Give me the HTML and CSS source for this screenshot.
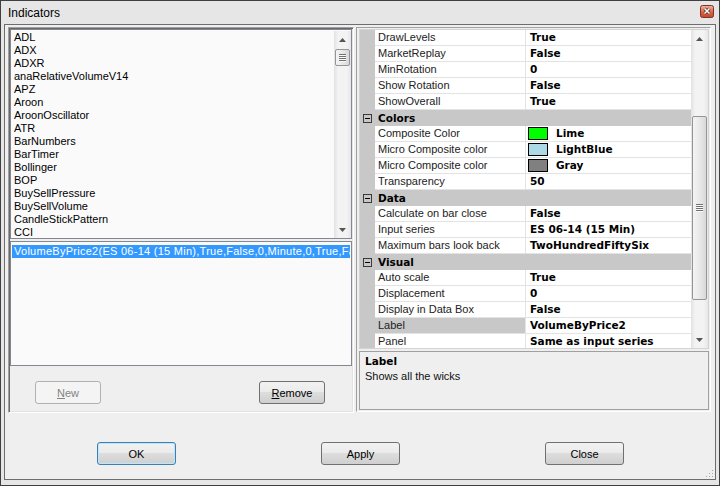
FILE: index.html
```html
<!DOCTYPE html>
<html lang="en">
<head>
    <meta charset="UTF-8">
    <title>Indicators</title>
    <link rel="stylesheet" href="styles.css">
</head>
<body>
    <div class="window">
        <div class="titlebar">
            <span class="title">Indicators</span>
            <div class="close-btn">
                <svg width="14" height="13" viewBox="0 0 14 13">
                    <defs>
                        <linearGradient id="closeGrad" x1="0" y1="0" x2="0" y2="1">
                            <stop offset="0" stop-color="#f2b7a6"/>
                            <stop offset="0.5" stop-color="#dc6b50"/>
                            <stop offset="1" stop-color="#c4452b"/>
                        </linearGradient>
                    </defs>
                    <rect x="0.5" y="0.5" width="13" height="12" rx="2" fill="url(#closeGrad)" stroke="#7d3424"/>
                    <path d="M4.5 3.5 L9.5 8.5 M9.5 3.5 L4.5 8.5" stroke="#5b2a20" stroke-width="3"/>
                    <path d="M4.5 3.5 L9.5 8.5 M9.5 3.5 L4.5 8.5" stroke="#fff" stroke-width="1.5"/>
                </svg>
            </div>
        </div>
        <div class="client">
            <div class="panes">
                <div class="left-pane">
                    <div class="listbox list-top">
                        <div class="items">
                            <div class="item">ADL</div>
                            <div class="item">ADX</div>
                            <div class="item">ADXR</div>
                            <div class="item">anaRelativeVolumeV14</div>
                            <div class="item">APZ</div>
                            <div class="item">Aroon</div>
                            <div class="item">AroonOscillator</div>
                            <div class="item">ATR</div>
                            <div class="item">BarNumbers</div>
                            <div class="item">BarTimer</div>
                            <div class="item">Bollinger</div>
                            <div class="item">BOP</div>
                            <div class="item">BuySellPressure</div>
                            <div class="item">BuySellVolume</div>
                            <div class="item">CandleStickPattern</div>
                            <div class="item">CCI</div>
                        </div>
                        <div class="vscroll">
                            <div class="sb-arrow"><svg width="7" height="4" viewBox="0 0 7 4"><path d="M0 4 L3.5 0 L7 4Z" fill="#555"/></svg></div>
                            <div class="sb-track">
                                <div class="sb-thumb thumb-list">
                                    <svg width="7" height="8" viewBox="0 0 7 8"><path d="M0 0.5h7M0 2.5h7M0 4.5h7M0 6.5h7" stroke="#707070"/><path d="M0 1.5h7M0 3.5h7M0 5.5h7M0 7.5h7" stroke="#fbfbfb"/></svg>
                                </div>
                            </div>
                            <div class="sb-arrow"><svg width="7" height="4" viewBox="0 0 7 4"><path d="M0 0 L7 0 L3.5 4Z" fill="#555"/></svg></div>
                        </div>
                    </div>
                    <div class="listbox list-bottom">
                        <div class="item selected">VolumeByPrice2(ES 06-14 (15 Min),True,False,0,Minute,0,True,False,Tr</div>
                    </div>
                    <div class="left-buttons">
                        <button class="btn btn-small" disabled><u>N</u>ew</button>
                        <button class="btn btn-small"><u>R</u>emove</button>
                    </div>
                </div>
                <div class="right-pane">
                    <div class="prop-grid">
                        <div class="prop-rows">
                            <div class="prop-row"><div class="gutter"></div><div class="prop-name">DrawLevels</div><div class="prop-value">True</div></div>
                            <div class="prop-row"><div class="gutter"></div><div class="prop-name">MarketReplay</div><div class="prop-value">False</div></div>
                            <div class="prop-row"><div class="gutter"></div><div class="prop-name">MinRotation</div><div class="prop-value">0</div></div>
                            <div class="prop-row"><div class="gutter"></div><div class="prop-name">Show Rotation</div><div class="prop-value">False</div></div>
                            <div class="prop-row"><div class="gutter"></div><div class="prop-name">ShowOverall</div><div class="prop-value">True</div></div>
                            <div class="cat-row"><span class="expander"></span>Colors</div>
                            <div class="prop-row"><div class="gutter"></div><div class="prop-name">Composite Color</div><div class="prop-value color-value"><span class="swatch swatch-lime"></span>Lime</div></div>
                            <div class="prop-row"><div class="gutter"></div><div class="prop-name">Micro Composite color</div><div class="prop-value color-value"><span class="swatch swatch-lightblue"></span>LightBlue</div></div>
                            <div class="prop-row"><div class="gutter"></div><div class="prop-name">Micro Composite color</div><div class="prop-value color-value"><span class="swatch swatch-gray"></span>Gray</div></div>
                            <div class="prop-row"><div class="gutter"></div><div class="prop-name">Transparency</div><div class="prop-value">50</div></div>
                            <div class="cat-row"><span class="expander"></span>Data</div>
                            <div class="prop-row"><div class="gutter"></div><div class="prop-name">Calculate on bar close</div><div class="prop-value">False</div></div>
                            <div class="prop-row"><div class="gutter"></div><div class="prop-name">Input series</div><div class="prop-value">ES 06-14 (15 Min)</div></div>
                            <div class="prop-row"><div class="gutter"></div><div class="prop-name">Maximum bars look back</div><div class="prop-value">TwoHundredFiftySix</div></div>
                            <div class="cat-row"><span class="expander"></span>Visual</div>
                            <div class="prop-row"><div class="gutter"></div><div class="prop-name">Auto scale</div><div class="prop-value">True</div></div>
                            <div class="prop-row"><div class="gutter"></div><div class="prop-name">Displacement</div><div class="prop-value">0</div></div>
                            <div class="prop-row"><div class="gutter"></div><div class="prop-name">Display in Data Box</div><div class="prop-value">False</div></div>
                            <div class="prop-row"><div class="gutter"></div><div class="prop-name selected">Label</div><div class="prop-value">VolumeByPrice2</div></div>
                            <div class="prop-row"><div class="gutter"></div><div class="prop-name">Panel</div><div class="prop-value">Same as input series</div></div>
                        </div>
                        <div class="vscroll">
                            <div class="sb-arrow"><svg width="7" height="4" viewBox="0 0 7 4"><path d="M0 4 L3.5 0 L7 4Z" fill="#555"/></svg></div>
                            <div class="sb-track">
                                <div class="sb-thumb thumb-grid">
                                    <svg width="7" height="8" viewBox="0 0 7 8"><path d="M0 0.5h7M0 2.5h7M0 4.5h7M0 6.5h7" stroke="#707070"/><path d="M0 1.5h7M0 3.5h7M0 5.5h7M0 7.5h7" stroke="#fbfbfb"/></svg>
                                </div>
                            </div>
                            <div class="sb-arrow"><svg width="7" height="4" viewBox="0 0 7 4"><path d="M0 0 L7 0 L3.5 4Z" fill="#555"/></svg></div>
                        </div>
                    </div>
                    <div class="desc">
                        <div class="desc-title">Label</div>
                        <div class="desc-text">Shows all the wicks</div>
                    </div>
                </div>
            </div>
            <div class="dialog-buttons">
                <button class="btn btn-dialog btn-default">OK</button>
                <button class="btn btn-dialog">Apply</button>
                <button class="btn btn-dialog">Close</button>
            </div>
            <svg class="grip" width="10" height="10" viewBox="0 0 10 10">
                <g fill="#a8a8a8">
                    <rect x="8" y="2" width="1" height="1"/>
                    <rect x="5" y="5" width="1" height="1"/><rect x="8" y="5" width="1" height="1"/>
                    <rect x="2" y="8" width="1" height="1"/><rect x="5" y="8" width="1" height="1"/><rect x="8" y="8" width="1" height="1"/>
                </g>
            </svg>
        </div>
    </div>
</body>
</html>
```

FILE: styles.css
```css
body {
    margin: 0;
    font-family: "Liberation Sans", Arial, sans-serif;
    font-size: 11px;
    background: #fff;
}
.window {
    width: 720px;
    height: 486px;
    box-sizing: border-box;
    border: 1px solid #3f3f3f;
    background: #e6e6e6;
    padding: 0 3px 5px 3px;
    display: flex;
    flex-direction: column;
}
.titlebar {
    height: 23px;
    flex: none;
    display: flex;
    justify-content: space-between;
    align-items: flex-start;
}
.title {
    margin: 5px 0 0 4px;
    font-size: 12px;
    line-height: 15px;
    color: #000;
}
.close-btn {
    margin: 4px 2px 0 0;
    height: 13px;
}
.client {
    flex: 1;
    border: 1px solid #6d6d6d;
    background: #efefef;
    display: flex;
    flex-direction: column;
    position: relative;
}
.panes {
    display: flex;
    padding: 2px 0 0 3px;
}
.left-pane {
    width: 346px;
    height: 386px;
    box-sizing: border-box;
    border: 1px solid;
    border-color: #a0a0a0 #fff #fff #a0a0a0;
    box-shadow: inset 1px 1px 0 #696969, inset -1px -1px 0 #e3e3e3;
    padding: 1px;
    display: flex;
    flex-direction: column;
}
.listbox {
    border: 1px solid #828790;
    background: #fafafa;
    box-sizing: border-box;
    display: flex;
    overflow: hidden;
}
.list-top {
    height: 210px;
    padding-top: 1px;
}
.list-bottom {
    height: 125px;
    margin-top: 2px;
    padding: 3px 1px;
    flex-direction: column;
}
.items {
    flex: 1;
    overflow: hidden;
}
.item {
    height: 13px;
    line-height: 13px;
    padding-left: 3px;
    white-space: nowrap;
    color: #000;
}
.item.selected {
    background: #3399ff;
    color: #fff;
    padding-left: 2px;
    overflow: hidden;
    letter-spacing: 0.27px;
}
.left-buttons {
    display: flex;
    gap: 158px;
    padding-left: 25px;
    margin-top: 15px;
}
.btn {
    box-sizing: border-box;
    height: 23px;
    padding: 0;
    border: 1px solid #707070;
    border-radius: 3px;
    background: linear-gradient(#f2f2f2, #ebebeb 45%, #dddddd 50%, #cfcfcf);
    font-family: "Liberation Sans", Arial, sans-serif;
    font-size: 11px;
    color: #000;
}
.btn u {
    text-decoration-thickness: 1px;
}
.btn:disabled {
    border-color: #adb2b5;
    background: #f4f4f4;
    color: #838383;
}
.btn-small {
    width: 66px;
}
.btn-dialog {
    width: 79px;
}
.btn-default {
    border-color: #3c7fb1;
    box-shadow: inset 0 0 0 1px #bde6fd;
}
.right-pane {
    margin-left: 2px;
    width: 355px;
    height: 385px;
    box-sizing: border-box;
    border: 1px solid;
    border-color: #a0a0a0 #fff #fff #a0a0a0;
    padding: 1px 1px 1px 2px;
    display: flex;
    flex-direction: column;
}
.prop-grid {
    height: 320px;
    flex: none;
    box-sizing: border-box;
    border: 1px solid #d4d4d4;
    display: flex;
    background: #fff;
}
.prop-rows {
    flex: 1;
    overflow: hidden;
}
.prop-row {
    display: flex;
    height: 16px;
}
.gutter {
    width: 15px;
    flex: none;
    background: #c8c8c8;
}
.prop-name {
    width: 151px;
    flex: none;
    box-sizing: border-box;
    padding-left: 3px;
    border-bottom: 1px solid #e3e3e3;
    border-right: 1px solid #e3e3e3;
    line-height: 15px;
    color: #222;
    white-space: nowrap;
}
.prop-name.selected {
    background: #c8c8c8;
}
.prop-value {
    flex: 1;
    padding-left: 4px;
    border-bottom: 1px solid #e3e3e3;
    font-family: "DejaVu Sans", sans-serif;
    font-weight: bold;
    font-size: 10.5px;
    line-height: 15px;
    color: #000;
    white-space: nowrap;
}
.color-value {
    display: flex;
    align-items: center;
    padding-left: 2px;
}
.swatch {
    width: 20px;
    height: 13px;
    box-sizing: border-box;
    border: 1px solid #000;
    margin-right: 8px;
}
.swatch-lime { background: #00ff00; }
.swatch-lightblue { background: #add8e6; }
.swatch-gray { background: #808080; }
.cat-row {
    height: 16px;
    display: flex;
    align-items: center;
    padding-left: 3px;
    background: #c8c8c8;
    font-family: "DejaVu Sans", sans-serif;
    font-weight: bold;
    font-size: 10.5px;
    color: #000;
}
.expander {
    width: 9px;
    height: 9px;
    box-sizing: border-box;
    border: 1px solid #3a3a3a;
    margin-right: 6px;
    position: relative;
}
.expander::after {
    content: "";
    position: absolute;
    left: 1px;
    top: 3px;
    width: 5px;
    height: 1px;
    background: #000;
}
.vscroll {
    width: 17px;
    flex: none;
    display: flex;
    flex-direction: column;
    background: linear-gradient(90deg, #e2e2e2, #f3f3f3 25%, #f3f3f3 75%, #e6e6e6);
}
.sb-arrow {
    height: 17px;
    flex: none;
    display: flex;
    align-items: center;
    justify-content: center;
}
.sb-track {
    flex: 1;
}
.sb-thumb {
    margin: 0 1px;
    box-sizing: border-box;
    border: 1px solid #959595;
    border-radius: 2px;
    background: linear-gradient(90deg, #f4f4f4, #e8e8e8 50%, #d8d8d8);
    display: flex;
    align-items: center;
    justify-content: center;
}
.thumb-list {
    margin-top: 1px;
    height: 17px;
}
.thumb-grid {
    margin-top: 69px;
    height: 184px;
}
.desc {
    height: 59px;
    margin-top: 2px;
    box-sizing: border-box;
    border: 1px solid #a0a0a0;
    padding: 2px 5px;
    line-height: 15px;
}
.desc-title {
    font-family: "DejaVu Sans", sans-serif;
    font-weight: bold;
    font-size: 10.5px;
}
.desc-text {
    color: #111;
}
.dialog-buttons {
    display: flex;
    gap: 145px;
    padding-left: 92px;
    margin-top: 29px;
}
.grip {
    position: absolute;
    right: 1px;
    bottom: 1px;
}
```
